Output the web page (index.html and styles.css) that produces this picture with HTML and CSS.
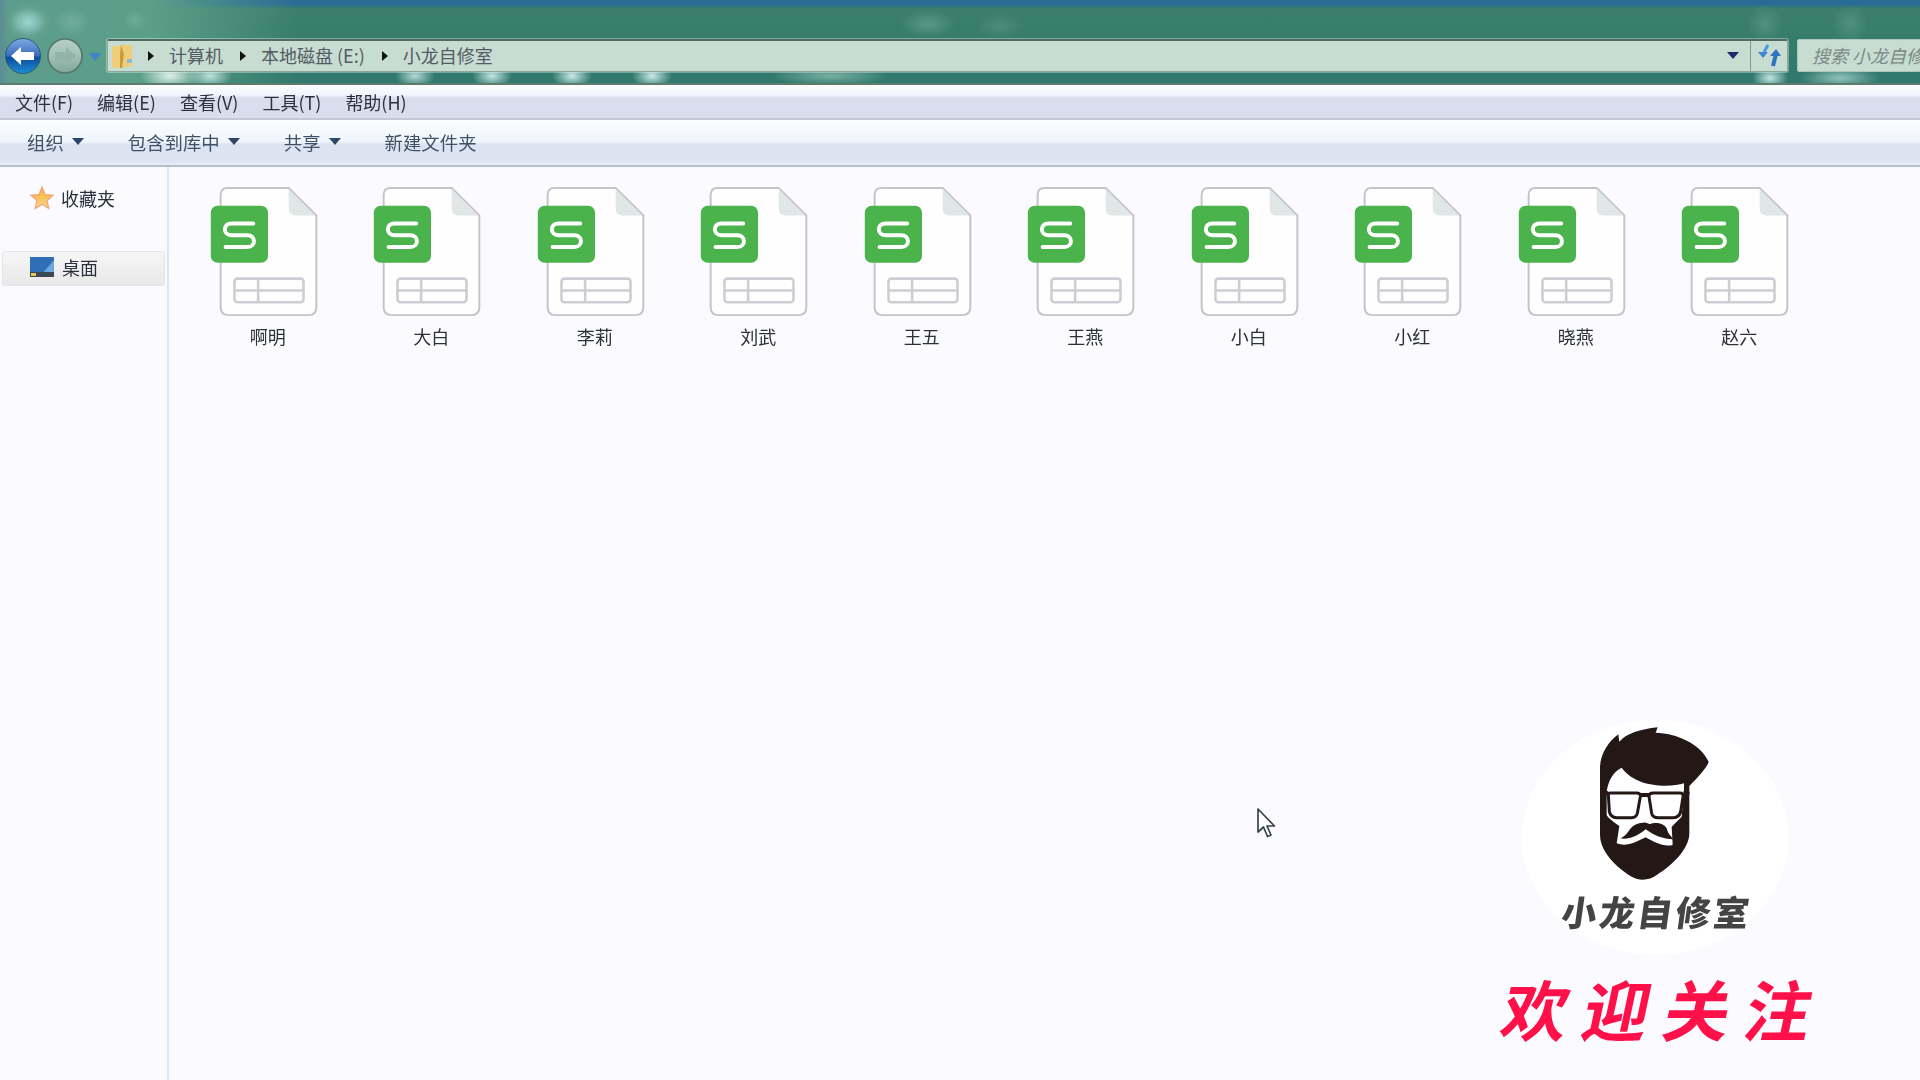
FILE: index.html
```html
<!DOCTYPE html>
<html lang="zh-CN">
<head>
<meta charset="utf-8">
<title>小龙自修室</title>
<link rel="stylesheet" href="styles.css">
</head>
<body>
<svg class="defs" width="0" height="0" aria-hidden="true">
  <symbol id="sheet" viewBox="3 0 130 145">
    <path d="M27 7H89L117 35V128Q117 136 109 136H28Q20 136 20 128V14Q20 7 27 7Z" fill="#fefefe" stroke="#c3c5c9" stroke-width="2"/>
    <path d="M89 8L116 35H96Q89 35 89 28Z" fill="#e1e6e6"/>
    <rect x="10" y="25" width="58" height="58" rx="7" fill="#4bb34b"/>
    <path d="M53 43H31C22 43 22 55 31 55H47C56 55 56 67 47 67H25" fill="none" stroke="#fff" stroke-width="4" stroke-linecap="round"/>
    <rect x="34" y="99" width="70" height="24" rx="3" fill="none" stroke="#cdced3" stroke-width="2.6"/>
    <path d="M34 111H104M58 99V123" stroke="#cdced3" stroke-width="2.6"/>
  </symbol>
</svg>

<header class="chrome">
  <div class="nav-btn back">
    <svg viewBox="0 0 36 36" width="36" height="36"><defs><linearGradient id="bk" x1="0" y1="0" x2="0" y2="1"><stop offset="0" stop-color="#7ea9e0"/><stop offset=".48" stop-color="#3d6fc0"/><stop offset=".55" stop-color="#0a4e9c"/><stop offset="1" stop-color="#1d8fd6"/></linearGradient></defs><circle cx="18" cy="18" r="17.5" fill="url(#bk)" stroke="#2d5b73"/><path d="M6 18L16 9V14H29V22H16V27Z" fill="#fff"/></svg>
  </div>
  <div class="nav-btn fwd">
    <svg viewBox="0 0 36 36" width="36" height="36"><defs><linearGradient id="fw" x1="0" y1="0" x2="0" y2="1"><stop offset="0" stop-color="#b5cfc6"/><stop offset=".5" stop-color="#a4c0b6"/><stop offset="1" stop-color="#7ea698"/></linearGradient></defs><circle cx="18" cy="18" r="17" fill="url(#fw)" stroke="#54756c" stroke-width="1.6"/><path d="M29 18L19 9V14H8V22H19V27Z" fill="#93b3a7"/></svg>
  </div>
  <svg class="nav-drop" viewBox="0 0 12 8" width="12" height="8"><path d="M0 0H12L6 8Z" fill="#3f83c9"/></svg>
  <div class="address">
    <svg class="folder" viewBox="0 0 20 24" width="20" height="24"><path d="M0 2H7L9 1H19Q20 1 20 3V22L8 24H2Q0 24 0 22Z" fill="#f0cd78"/><path d="M9 1L12 10L10 24H8L8 10Z" fill="#c99c42"/><path d="M15 15H20V19H15Z" fill="#8fb8c9"/></svg>
    <span class="crumb-arrow first"></span><span class="crumb c1">计算机</span>
    <span class="crumb-arrow"></span><span class="crumb">本地磁盘 (E:)</span>
    <span class="crumb-arrow"></span><span class="crumb">小龙自修室</span>
    <span class="addr-spacer"></span>
    <span class="addr-drop"></span>
    <span class="refresh">
      <svg viewBox="0 0 24 24" width="24" height="24"><path d="M11 1L7 8" stroke="#4a9ae0" stroke-width="3" fill="none"/><path d="M1 8H11L6 14Z" fill="#3f85d0"/><path d="M19 10L16 22" stroke="#2f72c4" stroke-width="4" fill="none"/><path d="M13 12L19 5L24 12Z" fill="#2f72c4"/></svg>
    </span>
  </div>
  <div class="search"><span>搜索 小龙自修室</span></div>
</header>

<nav class="menubar">
  <span>文件(F)</span><span>编辑(E)</span><span>查看(V)</span><span>工具(T)</span><span>帮助(H)</span>
</nav>

<div class="toolbar">
  <span class="tool caret">组织</span>
  <span class="tool caret">包含到库中</span>
  <span class="tool caret">共享</span>
  <span class="tool">新建文件夹</span>
</div>

<div class="body">
  <aside class="sidebar">
    <div class="side-row">
      <svg viewBox="0 0 24 24" width="24" height="24"><defs><linearGradient id="st" x1="0" y1="0" x2="0" y2="1"><stop offset="0" stop-color="#f5b22e"/><stop offset="1" stop-color="#f9d98a"/></linearGradient></defs><path d="M12 1L15 8.6L23 9.3L17 14.5L18.8 22.5L12 18.2L5.2 22.5L7 14.5L1 9.3L9 8.6Z" fill="url(#st)" stroke="#f0a478" stroke-width="1.2"/></svg>
      <span>收藏夹</span>
    </div>
    <div class="side-row selected">
      <svg viewBox="0 0 24 22" width="24" height="22"><rect x="0" y="1" width="24" height="20" fill="#2f6fb5"/><path d="M12 18L24 4V18Z" fill="#6fa8dc"/><rect x="0" y="16" width="24" height="5" fill="#3c4a58"/><rect x="1" y="17" width="5" height="3" fill="#e8c65a"/></svg>
      <span>桌面</span>
    </div>
  </aside>
  <main class="files">
    <figure class="file"><svg class="sheet"><use href="#sheet"/></svg><figcaption>啊明</figcaption></figure>
    <figure class="file"><svg class="sheet"><use href="#sheet"/></svg><figcaption>大白</figcaption></figure>
    <figure class="file"><svg class="sheet"><use href="#sheet"/></svg><figcaption>李莉</figcaption></figure>
    <figure class="file"><svg class="sheet"><use href="#sheet"/></svg><figcaption>刘武</figcaption></figure>
    <figure class="file"><svg class="sheet"><use href="#sheet"/></svg><figcaption>王五</figcaption></figure>
    <figure class="file"><svg class="sheet"><use href="#sheet"/></svg><figcaption>王燕</figcaption></figure>
    <figure class="file"><svg class="sheet"><use href="#sheet"/></svg><figcaption>小白</figcaption></figure>
    <figure class="file"><svg class="sheet"><use href="#sheet"/></svg><figcaption>小红</figcaption></figure>
    <figure class="file"><svg class="sheet"><use href="#sheet"/></svg><figcaption>晓燕</figcaption></figure>
    <figure class="file"><svg class="sheet"><use href="#sheet"/></svg><figcaption>赵六</figcaption></figure>
  </main>
</div>

<svg class="cursor" viewBox="0 0 20 30" width="20" height="30"><path d="M2 1V24L7.5 19L11.5 28.5L15 27L11 18H18.5Z" fill="#fff" stroke="#39424c" stroke-width="1.7" stroke-linejoin="round"/></svg>

<div class="brand">
  <svg class="face" viewBox="0 0 1080 780" width="360" height="260">
    <ellipse cx="526" cy="412" rx="400" ry="353" fill="#fff"/>
    <path d="M415 103L418 125C440 100 480 88 533 82L527 98C590 100 660 130 686 185C680 205 650 235 628 258V400C628 450 570 500 530 525C510 540 480 545 455 530C420 510 360 460 360 405V200C362 160 385 125 415 103Z" fill="#231815"/>
    <path d="M425 203C400 215 385 240 380 275V345C385 355 400 365 418 378L410 430C440 442 470 425 497 412C520 425 550 442 578 435L575 380L605 350L612 270V250C570 262 470 265 425 203Z" fill="#fff"/>
    <path d="M385 283Q385 279 392 279H470Q482 279 481 290L472 340Q468 353 455 353H410Q392 353 388 335Z" fill="#fff" stroke="#231815" stroke-width="9"/>
    <path d="M507 290Q507 279 520 279H600Q610 279 609 290L602 335Q598 353 580 353H535Q518 353 515 340Z" fill="#fff" stroke="#231815" stroke-width="9"/>
    <path d="M362 282L385 279M610 279L628 282M480 285H507" stroke="#231815" stroke-width="12"/>
    <path d="M420 415C450 405 445 370 490 368C500 367 505 372 510 372C520 367 550 365 560 385C565 405 575 410 580 418C550 418 520 405 497 388C470 410 445 420 420 415Z" fill="#231815"/>
  </svg>
  <div class="brand-name">小龙自修室</div>
  <div class="welcome">欢迎关注</div>
</div>
</body>
</html>
```

FILE: styles.css
```css
* { box-sizing: border-box; }
html, body { margin: 0; height: 100%; }
body {
  width: 1920px;
  height: 1080px;
  overflow: hidden;
  background: #fafaff;
  font-family: "Noto Sans CJK SC", "Noto Sans", sans-serif;
  font-size: 18px;
  color: #2c323c;
  position: relative;
  filter: blur(0.45px);
}
.defs { position: absolute; }

/* window chrome */
.chrome {
  height: 85px;
  padding: 38px 0 9px 5px;
  display: flex;
  align-items: center;
  overflow: hidden;
  border-bottom: 2px solid #5f7b70;
  background:
    radial-gradient(ellipse 18px 14px at 28px 22px, rgba(170,225,225,.75), transparent),
    radial-gradient(ellipse 24px 20px at 28px 22px, rgba(150,205,185,.4), transparent),
    radial-gradient(ellipse 18px 14px at 72px 22px, rgba(150,205,185,.35), transparent),
    radial-gradient(ellipse 12px 10px at 135px 20px, rgba(150,205,185,.3), transparent),
    radial-gradient(ellipse 28px 14px at 928px 24px, rgba(150,205,185,.35), transparent),
    radial-gradient(ellipse 24px 14px at 1000px 26px, rgba(150,205,185,.2), transparent),
    radial-gradient(ellipse 18px 20px at 1765px 24px, rgba(150,205,185,.25), transparent),
    radial-gradient(ellipse 18px 20px at 1850px 24px, rgba(150,205,185,.25), transparent),
    radial-gradient(ellipse 30px 14px at 170px 76px, rgba(230,245,240,.95), transparent),
    radial-gradient(ellipse 22px 12px at 210px 76px, rgba(210,240,240,.85), transparent),
    radial-gradient(ellipse 20px 12px at 415px 76px, rgba(210,240,240,.8), transparent),
    radial-gradient(ellipse 20px 12px at 492px 76px, rgba(210,240,240,.9), transparent),
    radial-gradient(ellipse 20px 12px at 572px 76px, rgba(210,240,240,.95), transparent),
    radial-gradient(ellipse 20px 12px at 652px 76px, rgba(210,240,240,.95), transparent),
    radial-gradient(ellipse 60px 10px at 830px 76px, rgba(190,230,220,.5), transparent),
    radial-gradient(ellipse 18px 12px at 1770px 78px, rgba(210,240,240,.9), transparent),
    radial-gradient(ellipse 40px 12px at 1840px 78px, rgba(210,240,240,.6), transparent),
    linear-gradient(90deg, #5d8a99 0, #5d9c8c 8px, #5a9f88 150px, rgba(58,128,106,0) 300px),
    linear-gradient(180deg, #2a6a97 0, #2a6a97 4px, #3a806a 9px, #30796c 72px, #30796c 100%);
}
.nav-btn { flex: none; width: 36px; height: 36px; display: flex; }
.fwd { margin-left: 6px; }
.nav-drop { flex: none; margin: 2px 0 0 6px; }
.address {
  flex: none;
  width: 1681px;
  height: 33px;
  margin: 0 0 2px 6px;
  padding-left: 4px;
  display: flex;
  align-items: center;
  background: #c7ddd2;
  border: 1px solid #8aa69c;
  border-top: 2px solid #4f6b62;
  border-radius: 2px;
  color: #555b63;
  box-shadow: 0 0 0 1px rgba(255,255,255,.35);
}
.folder { flex: none; }
.crumb-arrow {
  flex: none;
  width: 0; height: 0;
  margin-left: 17px;
  border-left: 6px solid #111;
  border-top: 5px solid transparent;
  border-bottom: 5px solid transparent;
}
.crumb-arrow.first { margin-left: 16px; }
.crumb { white-space: nowrap; margin: -2px 0 0 15px; line-height: 28px; }
.addr-spacer { flex: 1; }
.addr-drop {
  width: 0; height: 0;
  margin-right: 11px;
  border-top: 7px solid #1f2a6b;
  border-left: 6px solid transparent;
  border-right: 6px solid transparent;
}
.refresh {
  width: 37px;
  height: 100%;
  display: flex;
  align-items: center;
  justify-content: center;
  border-left: 1px solid #7e978d;
}
.search {
  flex: none;
  width: 140px;
  height: 33px;
  margin: 0 0 2px 9px;
  padding-left: 14px;
  display: flex;
  align-items: center;
  overflow: hidden;
  white-space: nowrap;
  background: #c7ddd2;
  border: 1px solid #aec6bb;
  border-radius: 2px;
  color: #7b8a86;
  font-style: italic;
}

/* menu */
.menubar {
  height: 35px;
  padding: 0 0 0 15px;
  display: flex;
  align-items: center;
  gap: 24px;
  border-bottom: 2px solid #c4c8d6;
  background: linear-gradient(180deg, #fdfdff 0, #f2f4fb 10px, #d9deef 13px, #d9deef 100%);
}
.toolbar {
  height: 47px;
  padding: 0 0 2px 27px;
  display: flex;
  align-items: center;
  gap: 44px;
  font-size: 18.4px;
  border-bottom: 2px solid #b4c2cc;
  background: linear-gradient(180deg, #fcfeff 0, #eff5fd 22px, #dde4f1 24px, #dde4f2 90%, #e4edf8 100%);
  color: #3e5166;
}
.tool { display: inline-flex; align-items: center; }
.caret::after {
  content: "";
  margin-left: 8px;
  border-top: 7px solid #2f4668;
  border-left: 6px solid transparent;
  border-right: 6px solid transparent;
}

/* body */
.body { display: flex; height: 913px; }
.sidebar {
  flex: none;
  width: 169px;
  padding: 16px 2px 0;
  border-right: 2px solid #d8e6f4;
}
.side-row {
  display: flex;
  align-items: center;
  gap: 7px;
  height: 30px;
  padding-left: 28px;
  margin-bottom: 38px;
}
.selected {
  width: 163px;
  height: 35px;
  padding: 0 0 3px 27px;
  gap: 8px;
  border: 1px solid #e2e6ea;
  border-radius: 3px;
  background: linear-gradient(180deg, #f6f6f7 0, #e9e9ea 100%);
}
.files {
  flex: 1;
  display: flex;
  align-items: flex-start;
  padding: 14px 0 0 17px;
}
.file {
  flex: none;
  width: 163.5px;
  margin: 0;
  display: flex;
  flex-direction: column;
  align-items: center;
}
.sheet { width: 130px; height: 143px; display: block; }
.file figcaption { line-height: 24px; font-size: 18px; color: #2c3038; }

/* overlays */
.cursor { position: absolute; left: 1256px; top: 808px; }
.brand { position: absolute; left: 1480px; top: 700px; width: 360px; height: 370px; }
.face { display: block; }
.brand-name {
  position: absolute;
  left: 82px;
  top: 186px;
  white-space: nowrap;
  font-size: 35px;
  line-height: 50px;
  letter-spacing: 3px;
  font-weight: 900;
  color: #444;
  transform: skewX(-8deg);
}
.welcome {
  position: absolute;
  left: 24px;
  top: 267px;
  white-space: nowrap;
  font-size: 66px;
  line-height: 80px;
  letter-spacing: 15px;
  font-weight: 700;
  color: #ff1048;
  transform: skewX(-12deg);
}
```
